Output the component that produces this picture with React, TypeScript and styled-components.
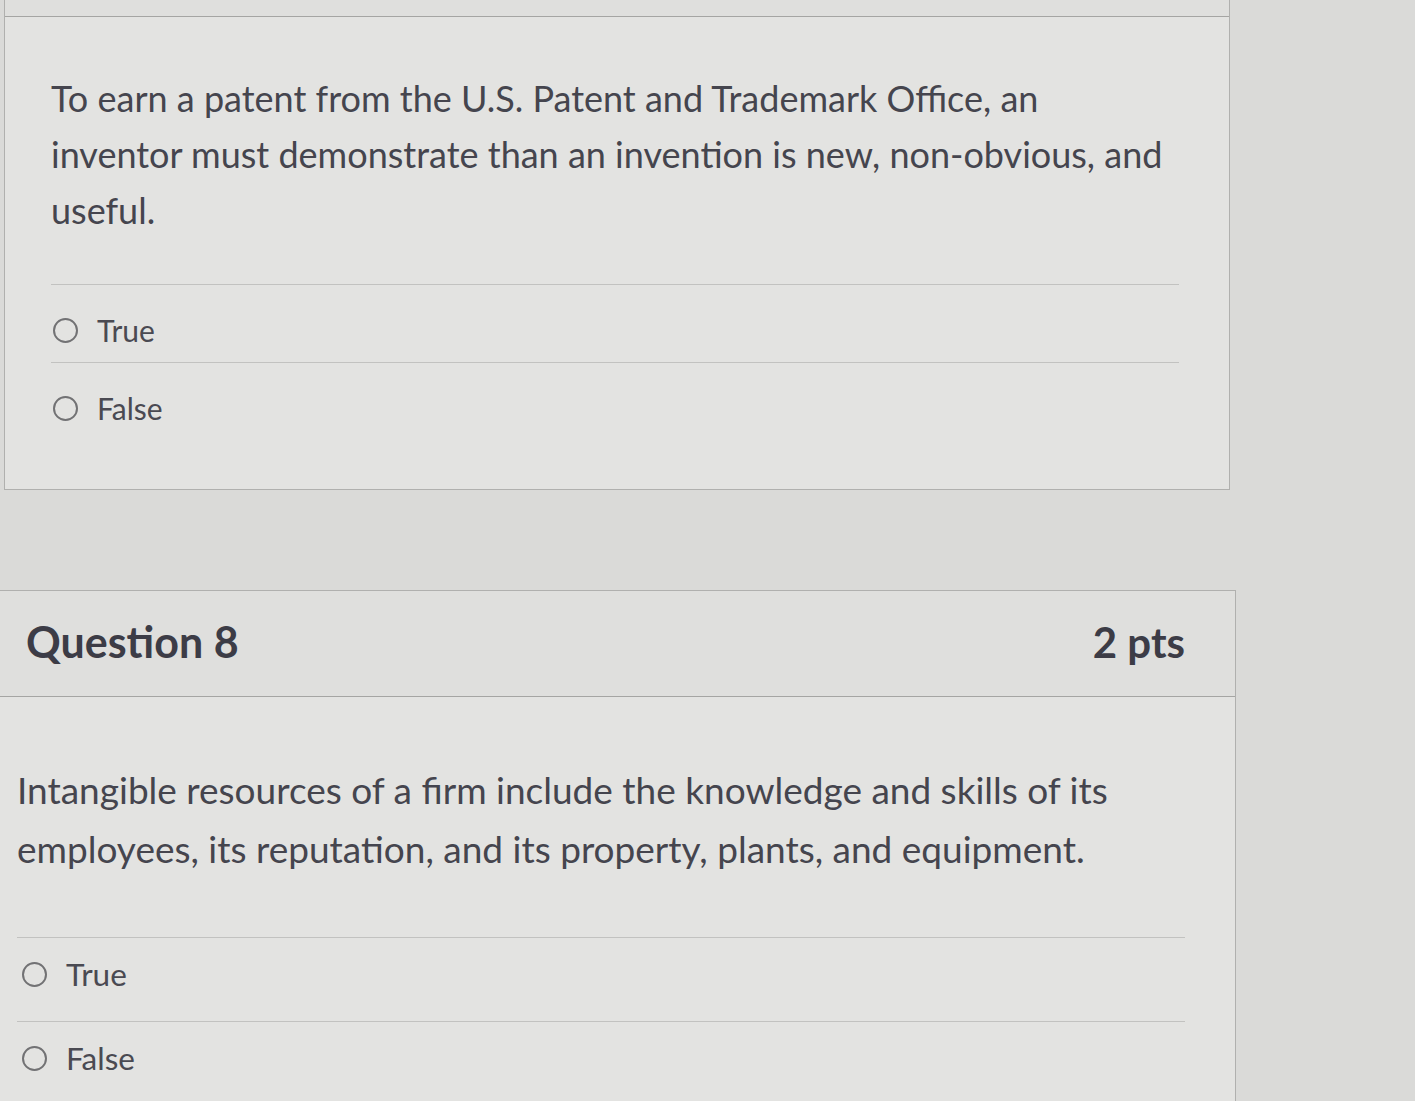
import * as React from 'react';
import styled, { createGlobalStyle } from 'styled-components';

const GlobalStyle = createGlobalStyle`
  html, body {
    margin: 0;
    padding: 0;
    background: #dadad8;
    overflow: hidden;
  }
  body {
    font-family: Lato, "Open Sans", "Liberation Sans", sans-serif;
    color: #3f3f47;
  }
`;

const Page = styled.div`
  width: 1415px;
  height: 1101px;
  overflow: hidden;
  display: flex;
  flex-direction: column;
`;

const Card = styled.section<{ $left: number; $width: number; $top: number }>`
  margin-left: ${(p) => p.$left}px;
  margin-top: ${(p) => p.$top}px;
  width: ${(p) => p.$width}px;
  background: #e3e3e1;
  border: 1px solid #b0b0ae;
  box-sizing: border-box;
  flex-shrink: 0;
`;

const Header = styled.header<{ $height: number }>`
  height: ${(p) => p.$height}px;
  display: flex;
  align-items: center;
  justify-content: space-between;
  padding: 0 50px 4px 27px;
  box-sizing: border-box;
  background: #dfdfdd;
  border-bottom: 1px solid #a5a5a3;
`;

const Title = styled.h2`
  margin: 0;
  font-size: 43px;
  font-weight: 700;
  color: #3c3c46;
`;

const Points = styled.span`
  font-size: 42px;
  font-weight: 700;
  color: #3c3c46;
`;

const Body = styled.div<{ $pad: number; $top: number }>`
  padding: ${(p) => p.$top}px 50px 0 ${(p) => p.$pad}px;
`;

const Prompt = styled.p<{ $size: number; $line: number; $max: number }>`
  margin: 0;
  max-width: ${(p) => p.$max}px;
  font-size: ${(p) => p.$size}px;
  line-height: ${(p) => p.$line}px;
  color: #45454e;
`;

const Answers = styled.div<{ $gap: number; $bottom: number }>`
  margin-top: ${(p) => p.$gap}px;
  padding-bottom: ${(p) => p.$bottom}px;
`;

const Answer = styled.label<{
  $height: number;
  $offset: number;
  $indent: number;
  $size: number;
}>`
  display: flex;
  align-items: flex-start;
  gap: 19px;
  height: ${(p) => p.$height}px;
  box-sizing: border-box;
  padding: ${(p) => p.$offset}px 0 0 ${(p) => p.$indent}px;
  border-top: 1px solid #c2c2c0;
  font-size: ${(p) => p.$size}px;
  line-height: 36px;
  color: #4a4a52;
`;

const Radio = styled.span`
  width: 25px;
  height: 25px;
  margin-top: 6px;
  border-radius: 50%;
  border: 2px solid #727274;
  box-sizing: border-box;
  flex-shrink: 0;
`;

type QuestionProps = {
  left: number;
  width: number;
  top: number;
  headerHeight: number;
  title?: string;
  points?: string;
  pad: number;
  bodyTop: number;
  prompt: string;
  size: number;
  line: number;
  max: number;
  gap: number;
  rowHeight: number;
  offset: number;
  indent: number;
  answerSize: number;
  bottom: number;
};

const Question: React.FC<QuestionProps> = ({
  left,
  width,
  top,
  headerHeight,
  title,
  points,
  pad,
  bodyTop,
  prompt,
  size,
  line,
  max,
  gap,
  rowHeight,
  offset,
  indent,
  answerSize,
  bottom,
}) => (
  <Card $left={left} $width={width} $top={top}>
    <Header $height={headerHeight}>
      {title && <Title>{title}</Title>}
      {points && <Points>{points}</Points>}
    </Header>
    <Body $pad={pad} $top={bodyTop}>
      <Prompt $size={size} $line={line} $max={max}>
        {prompt}
      </Prompt>
      <Answers $gap={gap} $bottom={bottom}>
        {['True', 'False'].map((a) => (
          <Answer
            key={a}
            $height={rowHeight}
            $offset={offset}
            $indent={indent}
            $size={answerSize}
          >
            <Radio />
            {a}
          </Answer>
        ))}
      </Answers>
    </Body>
  </Card>
);

export default function App() {
  return (
    <Page>
      <GlobalStyle />
      <Question
        left={4}
        width={1226}
        top={-2}
        headerHeight={18}
        pad={46}
        bodyTop={53}
        prompt="To earn a patent from the U.S. Patent and Trademark Office, an inventor must demonstrate than an invention is new, non-obvious, and useful."
        size={36}
        line={56}
        max={1117}
        gap={46}
        rowHeight={78}
        offset={27}
        indent={2}
        answerSize={30}
        bottom={49}
      />
      <Question
        left={-2}
        width={1238}
        top={100}
        headerHeight={106}
        title="Question 8"
        points="2 pts"
        pad={18}
        bodyTop={63}
        prompt="Intangible resources of a firm include the knowledge and skills of its employees, its reputation, and its property, plants, and equipment."
        size={37}
        line={59}
        max={1170}
        gap={59}
        rowHeight={84}
        offset={18}
        indent={5}
        answerSize={31.5}
        bottom={40}
      />
    </Page>
  );
}
